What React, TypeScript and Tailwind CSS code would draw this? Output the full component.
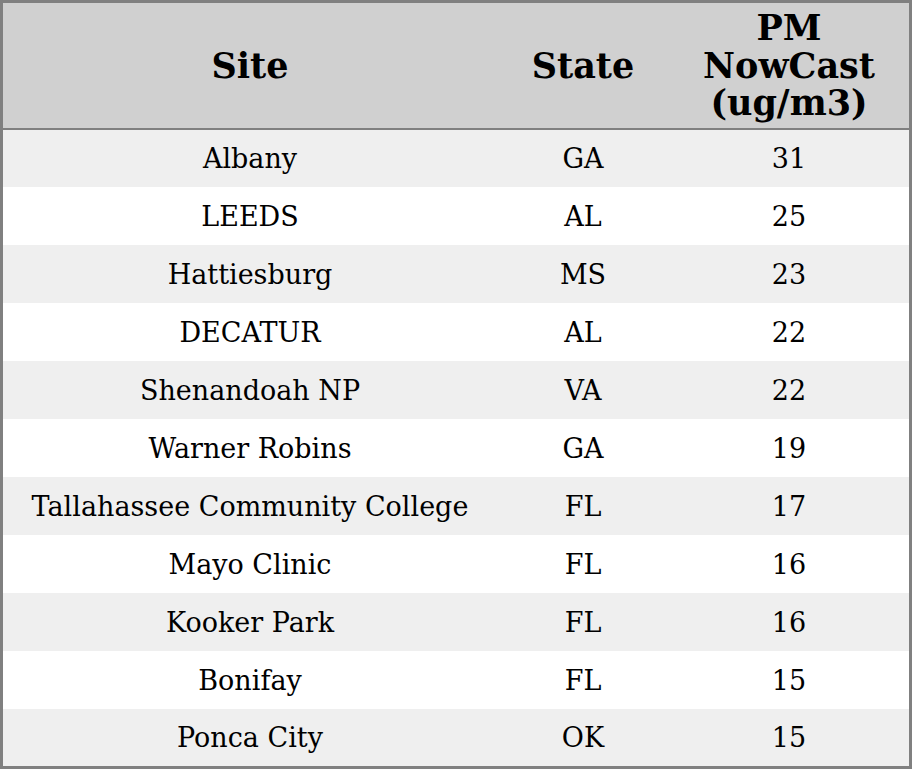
const rows = [
  { site: "Albany", state: "GA", pm: 31 },
  { site: "LEEDS", state: "AL", pm: 25 },
  { site: "Hattiesburg", state: "MS", pm: 23 },
  { site: "DECATUR", state: "AL", pm: 22 },
  { site: "Shenandoah NP", state: "VA", pm: 22 },
  { site: "Warner Robins", state: "GA", pm: 19 },
  { site: "Tallahassee Community College", state: "FL", pm: 17 },
  { site: "Mayo Clinic", state: "FL", pm: 16 },
  { site: "Kooker Park", state: "FL", pm: 16 },
  { site: "Bonifay", state: "FL", pm: 15 },
  { site: "Ponca City", state: "OK", pm: 15 },
];

export default function App() {
  return (
    <div className="w-[912px] h-[769px] bg-white font-['DejaVu_Serif',serif] text-black">
      <div className="border-[3px] border-[#808080] flex flex-col">
        {/* header */}
        <div className="grid grid-cols-[494px_172px_240px] h-[127px] bg-[#d0d0d0] border-b-[2px] border-[#808080] text-[35px] font-bold leading-[37.5px]">
          <div className="flex items-center justify-center">Site</div>
          <div className="flex items-center justify-center">State</div>
          <div className="flex flex-col items-center justify-center text-center">
            <span>PM</span>
            <span>NowCast</span>
            <span>(ug/m3)</span>
          </div>
        </div>

        {rows.map((r, i) => (
          <div
            key={r.site}
            className={`grid grid-cols-[494px_172px_240px] text-[27px] pt-[2px] ${
              i === 0 || i === rows.length - 1 ? "h-[57px]" : "h-[58px]"
            } ${i % 2 === 0 ? "bg-[#efefef]" : "bg-white"}`}
          >
            <div className="flex items-center justify-center">{r.site}</div>
            <div className="flex items-center justify-center">{r.state}</div>
            <div className="flex items-center justify-center">{r.pm}</div>
          </div>
        ))}
      </div>
    </div>
  );
}
